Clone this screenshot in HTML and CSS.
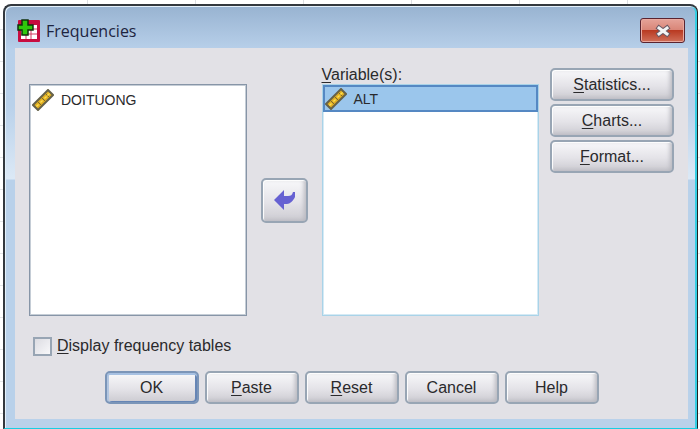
FILE: index.html
```html
<!DOCTYPE html>
<html lang="en">
<head>
    <meta charset="UTF-8">
    <meta name="viewport" content="width=device-width, initial-scale=1.0">
    <title>Frequencies</title>
    <link rel="stylesheet" href="styles.css">
</head>
<body>
    <!-- one ruler icon, used by both lists -->
    <svg class="defs" aria-hidden="true">
        <symbol id="ruler" viewBox="0 0 22 22">
            <path d="M1 16 16 1l5 5L6 21z" fill="#e0ae22" stroke="#66624a" stroke-width="2"/>
            <path d="m5 12 5 5M9 8l5 5M13 4l5 5" stroke="#7a6a30" stroke-width="1"/>
            <path d="m5 16 1 1m3-5 1 1m3-5 1 1m2-4 1 1" stroke="#ffe050" stroke-width="3"/>
        </symbol>
    </svg>

    <div class="window">
        <header class="titlebar">
            <svg class="app-icon" viewBox="0 0 24 24" aria-hidden="true">
                <rect x="1" y="1" width="22" height="22" rx="1" fill="#c80d40"/>
                <path d="M4 6h16v14H4z" fill="#fff"/>
                <path d="M4 10h16M4 15h16M9 6v14M14 6v14" stroke="#d43a62" stroke-width="1"/>
                <path d="M5 1h6v5h5v5h-5v5H5v-5H1V6h4z" fill="#2fc80c" stroke="#10300c" stroke-width="1.5"/>
            </svg>
            <h1>Frequencies</h1>
            <button class="close" aria-label="Close">
                <svg viewBox="0 0 16 14" aria-hidden="true">
                    <path d="m4 4 8 6M12 4l-8 6" stroke="#6a5a65" stroke-width="5" stroke-linecap="square"/>
                    <path d="m4 4 8 6M12 4l-8 6" stroke="#f4f4f4" stroke-width="3" stroke-linecap="square"/>
                </svg>
            </button>
        </header>

        <main class="panel">
            <div class="picker">
                <ul class="list source" role="listbox" aria-label="Available variables">
                    <li role="option" aria-selected="false"><svg class="ruler"><use href="#ruler"/></svg>DOITUONG</li>
                </ul>
                <button class="btn move" aria-label="Move variable">
                    <svg viewBox="0 0 22 20" aria-hidden="true">
                        <path d="M1 10 11 0v6h4c3 0 4-1 5-4h2v5c-2 4-5 7-8 7h-3v6z" fill="#6661d2"/>
                    </svg>
                </button>
                <span class="list-label" id="variables"><u>V</u>ariable(s):</span>
                <ul class="list target" role="listbox" aria-labelledby="variables">
                    <li class="selected" role="option" aria-selected="true"><svg class="ruler"><use href="#ruler"/></svg>ALT</li>
                </ul>
                <div class="options">
                    <button class="btn"><u>S</u>tatistics...</button>
                    <button class="btn"><u>C</u>harts...</button>
                    <button class="btn"><u>F</u>ormat...</button>
                </div>
            </div>

            <label class="check">
                <input type="checkbox">
                <span><u>D</u>isplay frequency tables</span>
            </label>

            <div class="actions">
                <button class="btn default">OK</button>
                <button class="btn"><u>P</u>aste</button>
                <button class="btn"><u>R</u>eset</button>
                <button class="btn">Cancel</button>
                <button class="btn">Help</button>
            </div>
        </main>
    </div>
</body>
</html>
```
FILE: styles.css
```css
*{
    box-sizing: border-box;
}
body{
    display: flex;
    min-height: 100vh;
    margin: 0;
    padding: 4px 2px 0 3px;
    font: 16px/20px "Liberation Sans", Arial, sans-serif;
    color: #2a2a2c;
    /* spreadsheet grid behind the dialog */
    background:
        repeating-linear-gradient(90deg, transparent 0 87px, #dcdee2 87px 88px, transparent 88px 108px),
        repeating-linear-gradient(transparent 0 29px, #e4e6e8 29px 30px, transparent 30px 32px),
        #fff;
}
.defs{
    position: absolute;
    width: 0;
    height: 0;
}
u{
    text-underline-offset: 2px;
}
.window{
    flex: 1;
    display: flex;
    flex-direction: column;
    padding: 0 9px 9px 10px;
    border: 2px solid #33383e;
    border-right: 1px solid #222;
    border-bottom: 1px solid #18cfe2;
    border-radius: 8px 8px 0 0;
    box-shadow: inset 1px 1px #e4f1fb, inset -2px 0 #35cfe4;
    background: linear-gradient(#98b3d1, #b8d0ea 44px, #b9d1ea 100px, #dce9f6 173px, #b9d1ea 174px);
}
.titlebar{
    display: flex;
    align-items: center;
    gap: 5px;
    height: 42px;
    padding: 7px 3px 0 2px;
}
.titlebar h1{
    flex: 1;
    margin: 0;
    font: 16px/24px "Open Sans", "Noto Sans", sans-serif;
    color: #1d2440;
}
.app-icon{
    width: 24px;
    height: 24px;
}
.close{
    display: flex;
    align-items: center;
    justify-content: center;
    width: 45px;
    height: 25px;
    padding: 0;
    border: 1px solid #5a2430;
    border-radius: 3px;
    box-shadow: inset 0 0 0 1px #e9aaa0;
    background: linear-gradient(#e5a399, #d98577 48%, #b93a22 50%, #d0705a);
}
.close svg{
    width: 16px;
    height: 14px;
}
.panel{
    flex: 1;
    padding: 20px 14px 14px;
    background: #e2e1e6;
}
.picker{
    display: grid;
    grid-template-columns: 1fr 75px 1fr 135px;
    grid-template-rows: 16px minmax(232px, auto);
}
.list{
    grid-row: 2;
    margin: 0;
    padding: 1px;
    list-style: none;
    background: #fff;
    border: 1px solid #8795a7;
    box-shadow: inset 0 0 0 1px #c5cdd6;
}
.list li{
    display: flex;
    align-items: center;
    gap: 7px;
    height: 28px;
    padding-left: 1px;
    font-size: 14px;
}
.source{
    grid-column: 1;
}
.target{
    grid-column: 3;
    padding: 0;
    border-color: #a9d3e8;
    box-shadow: inset 0 0 0 1px #d5eaf5;
}
.list .selected{
    height: 27px;
    padding-left: 0;
    border: 2px solid #5588c3;
    background: #9bc6ec;
}
.list-label{
    grid-column: 3;
    grid-row: 1;
    line-height: 14px;
}
.ruler{
    width: 22px;
    height: 22px;
}
.btn{
    height: 33px;
    padding: 0;
    font: inherit;
    color: inherit;
    border: 2px solid #98a5b4;
    border-radius: 5px;
    box-shadow: inset 1px 1px 1px #fff, inset -2px -1px 4px #b9b9c0;
    background: linear-gradient(#f8f8fa, #e4e3e8 55%, #cccbd1);
}
.move{
    grid-column: 2;
    grid-row: 2;
    place-self: center;
    display: flex;
    align-items: center;
    justify-content: center;
    width: 47px;
    height: 45px;
}
.move svg{
    width: 22px;
    height: 20px;
}
.options{
    grid-column: 4;
    grid-row: 1 / 3;
    display: flex;
    flex-direction: column;
    gap: 3px;
    padding-left: 11px;
}
.check{
    display: flex;
    align-items: center;
    gap: 5px;
    width: max-content;
    margin: 20px 0 0 4px;
}
.check input{
    appearance: none;
    width: 19px;
    height: 19px;
    margin: 0;
    border: 2px solid #98a5b4;
    background: linear-gradient(135deg, #dcdce2, #f8f8fa);
}
.check input:checked{
    background: #4d6fa8;
}
.actions{
    display: flex;
    justify-content: center;
    gap: 6px;
    margin-top: 15px;
}
.actions .btn{
    width: 94px;
}
.default{
    border-color: #7b95b8;
    box-shadow: inset 0 2px #a6c0e2, inset 2px 0 #b3c6e0, inset -2px -1px #6685b5;
}
```
